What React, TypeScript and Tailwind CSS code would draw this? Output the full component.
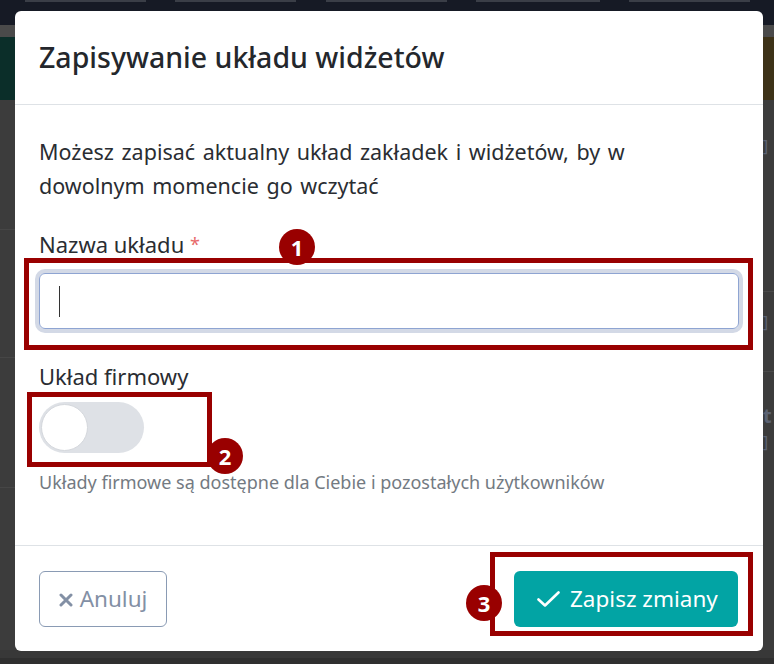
import React from "react"

const Badge = ({ n, className }: { n: number; className: string }) => (
  <div
    className={`absolute flex h-[36px] w-[36px] items-center justify-center rounded-full bg-[#990000] text-[22px] font-bold leading-none text-white ${className}`}
  >
    {n}
  </div>
)

const Backdrop = () => (
  <div className="flex h-full w-full flex-col bg-[#3c3c3c]">
    {/* navbar behind the overlay */}
    <div className="relative h-[25px] bg-[#161a25]">
      <div className="absolute left-[25px] top-0 h-[2px] w-[121px] bg-[#3a3e47]" />
      <div className="absolute left-[175px] top-0 h-[2px] w-[121px] bg-[#3a3e47]" />
      <div className="absolute left-[326px] top-0 h-[2px] w-[121px] bg-[#3a3e47]" />
      <div className="absolute left-[476px] top-0 h-[2px] w-[124px] bg-[#3a3e47]" />
      <div className="absolute left-[629px] top-0 h-[2px] w-[121px] bg-[#3a3e47]" />
    </div>
    <div className="h-[12px] bg-[#4a4a4a]" />
    <div className="flex h-[63px] justify-between">
      <div className="w-[15px] bg-[#0b2e29]" />
      <div className="w-[11px] bg-[#3d3218]" />
    </div>
    <div className="flex flex-1 justify-between">
      <div className="flex w-[15px] flex-col">
        <div className="h-[130px] border-b border-[#464646]" />
        <div className="h-[128px] border-b border-[#464646]" />
        <div className="h-[130px] border-b border-[#464646]" />
      </div>
      <div className="flex w-[11px] flex-col font-['Noto_Sans',sans-serif] text-[16px] leading-none text-[#5b6272]">
        <div className="h-[192px] border-b border-[#4a4a4a] pt-[38px]">]</div>
        <div className="h-[80px] border-b border-[#4a4a4a] pt-[22px]">]</div>
        <div className="pt-[34px] text-[20px] font-bold">t</div>
        <div className="pt-[8px]">]</div>
      </div>
    </div>
    <div className="h-[14px] border-t-[8px] border-[#383838] bg-[#2f2f2f]" />
  </div>
)

export default function App() {
  return (
    <div className="relative h-[664px] w-[774px] overflow-hidden font-['Noto_Sans',sans-serif]">
      <Backdrop />

      {/* modal */}
      <div className="absolute left-[15px] top-[11px] flex h-[640px] w-[748px] flex-col rounded-[6px] bg-white">
        <div className="flex h-[94px] items-center border-b border-[#dee2e6] px-[24px]">
          <h5 className="text-[28.5px] font-medium leading-none text-[#24272c]">Zapisywanie układu widżetów</h5>
        </div>

        <div className="flex flex-1 flex-col px-[24px] pt-[30px]">
          <p className="text-[21.5px] leading-[34px] text-[#2a2d32] [word-spacing:2px]">
            Możesz zapisać aktualny układ zakładek i widżetów, by w
            <br />
            dowolnym momencie go wczytać
          </p>

          <label className="mt-[26px] text-[22px] leading-[30px] text-[#2a2d32]">
            Nazwa układu <span className="align-top text-[18px] text-[#e86a6a]">*</span>
          </label>
          <div className="mt-[14px] flex h-[56px] items-center rounded-[6px] border border-[#8ea4d2] px-[19px] shadow-[0_0_0_4px_#d3d9e6]">
            <div className="h-[31px] w-px bg-[#333]" />
          </div>

          <div className="mt-[32px] text-[22px] leading-[30px] text-[#2a2d32]">Układ firmowy</div>
          <div className="mt-[11px] flex h-[51px] w-[105px] items-center rounded-full bg-[#dee1e6] px-[2px]">
            <div className="h-[47px] w-[47px] rounded-full border border-[#d4d7dc] bg-white" />
          </div>
          <div className="mt-[16px] text-[18px] leading-[26px] text-[#737a82]">
            Układy firmowe są dostępne dla Ciebie i pozostałych użytkowników
          </div>
        </div>

        <div className="flex h-[106px] items-center justify-between border-t border-[#dee2e6] pl-[24px] pr-[25px]">
          <button className="flex h-[56px] w-[128px] items-center justify-center gap-[7px] rounded-[6px] border border-[#8a9bb4] text-[22.5px] text-[#8390a5]">
            <svg width="14" height="14" viewBox="0 0 14 14" className="mt-[2px]">
              <path d="M2 2 L12 12 M12 2 L2 12" stroke="#8390a5" strokeWidth="3" strokeLinecap="round" />
            </svg>
            Anuluj
          </button>
          <button className="flex h-[56px] w-[224px] items-center gap-[10px] rounded-[6px] bg-[#02a4a4] pl-[23px] text-[22.5px] text-white">
            <svg width="23" height="16" viewBox="0 0 23 16">
              <path d="M1.5 8.5 L8 14.5 L21.5 1.5" fill="none" stroke="white" strokeWidth="2.6" strokeLinecap="round" strokeLinejoin="round" />
            </svg>
            Zapisz zmiany
          </button>
        </div>

        {/* annotation overlays */}
        <div className="absolute left-[9px] top-[247px] h-[92px] w-[729px] border-[5px] border-[#990000]" />
        <div className="absolute left-[12px] top-[381px] h-[75px] w-[185px] border-[5px] border-[#990000]" />
        <div className="absolute left-[475px] top-[541px] h-[84px] w-[263px] border-[5px] border-[#990000]" />
        <Badge n={1} className="left-[264px] top-[218px]" />
        <Badge n={2} className="left-[192px] top-[427px]" />
        <Badge n={3} className="left-[451px] top-[574px]" />
      </div>
    </div>
  )
}
